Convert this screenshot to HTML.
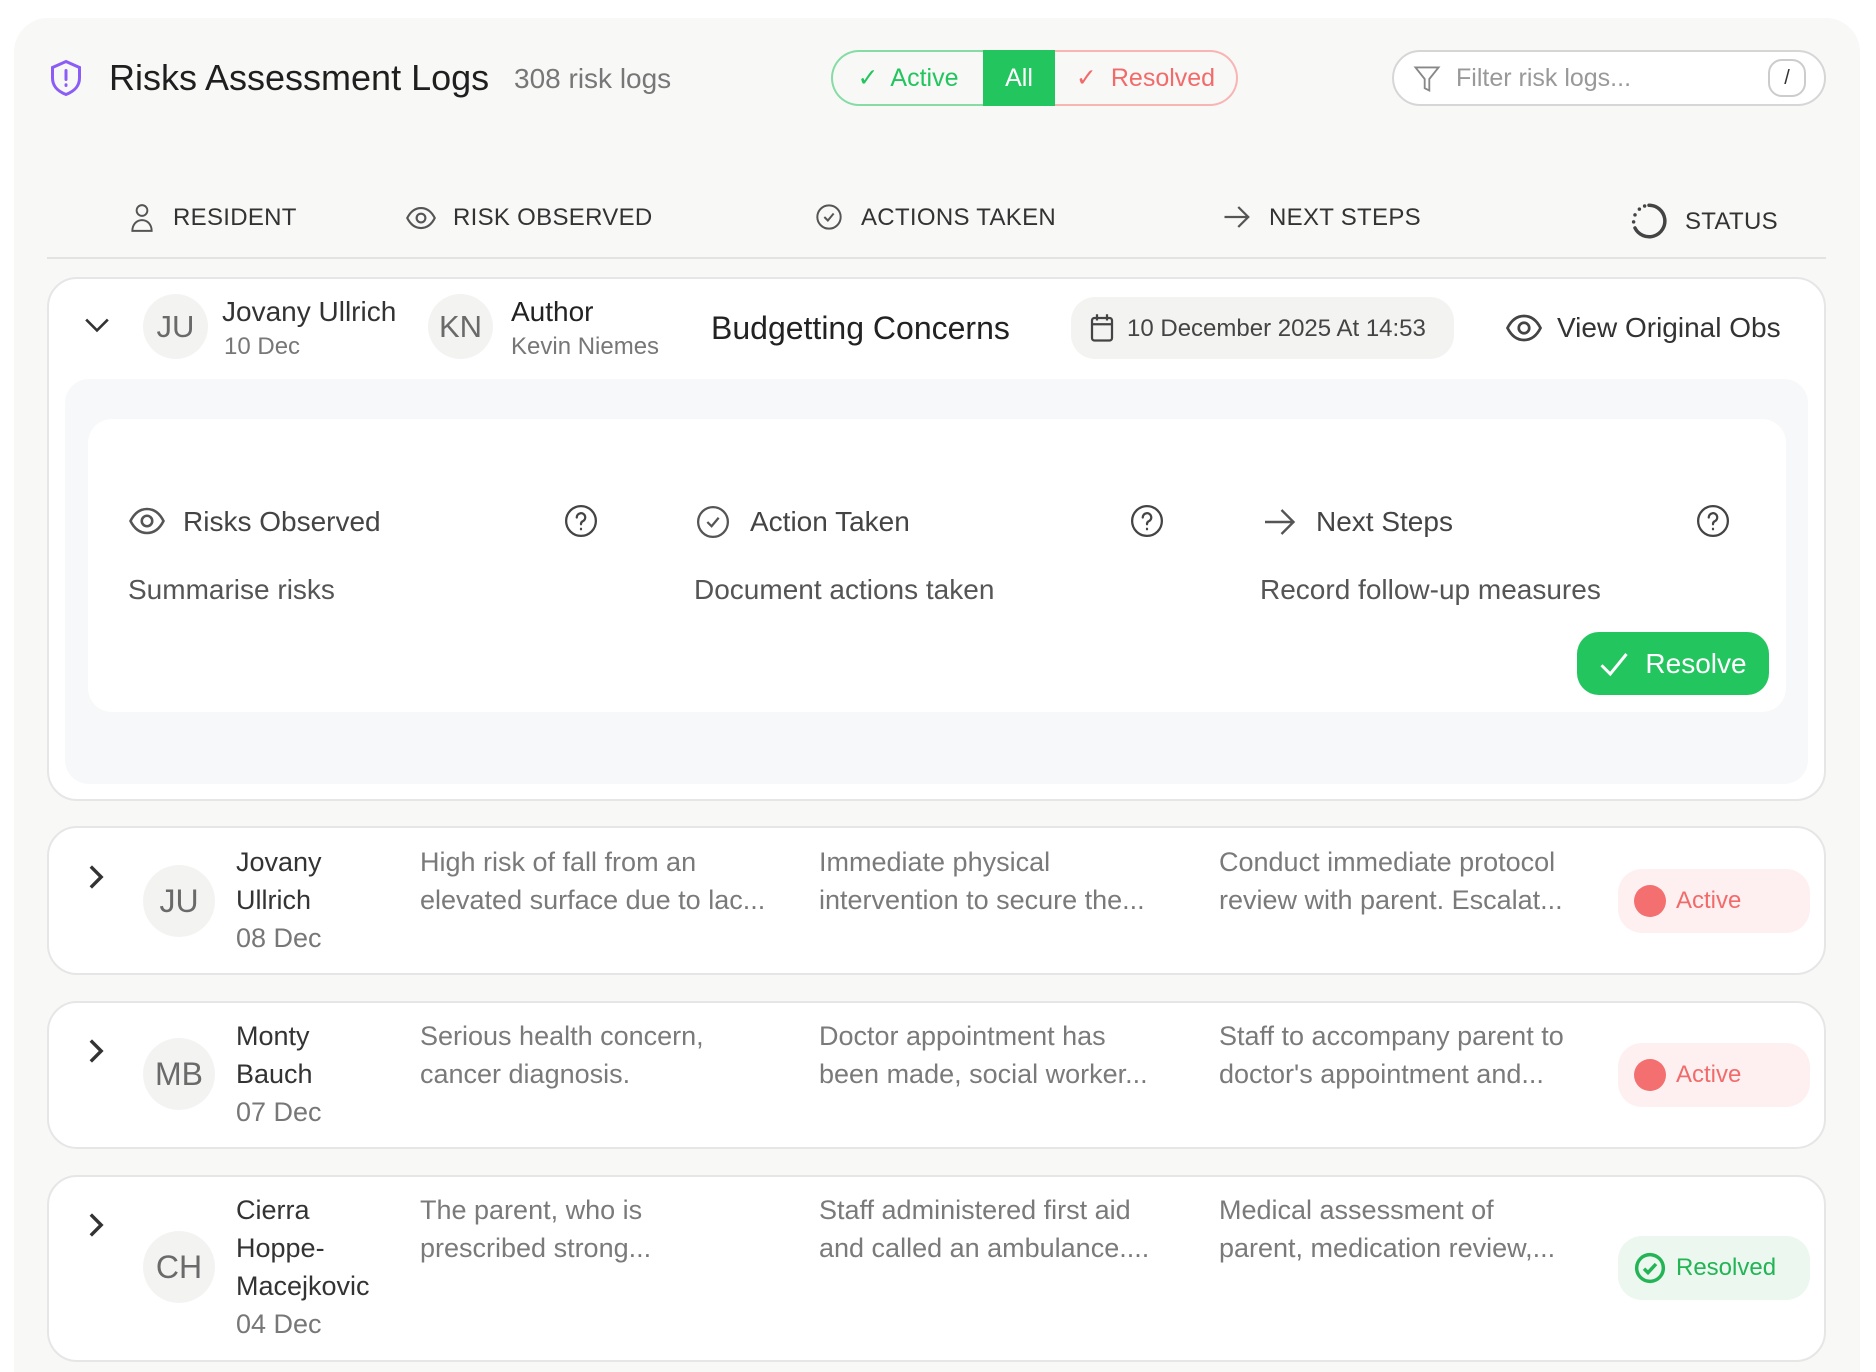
<!DOCTYPE html>
<html><head><meta charset="utf-8"><style>
*{box-sizing:border-box;margin:0;padding:0}
html{width:1876px;height:1372px;overflow:hidden}
body{width:1876px;height:1372px;background:#fff;font-family:"Liberation Sans",sans-serif;position:relative;overflow:hidden;color:#222}
.a{position:absolute}
.outer{left:14px;top:18px;width:1846px;height:1354px;background:#f8f8f7;border-radius:34px 34px 0 0}
.card{background:#fff;border:2px solid #e6e6e6;border-radius:30px}
.hdr{font-size:24px;color:#333;letter-spacing:.3px;top:204px}
.av{border-radius:50%;background:#f3f3f2;color:#6a6a6a;display:flex;align-items:center;justify-content:center}
.rt{font-size:27px;color:#7a7a7a;line-height:38px;white-space:nowrap}
.nm{font-size:27px;color:#333;line-height:38px}
.pill{border-radius:24px;display:flex;align-items:center;font-size:24px}
svg{display:block}
</style></head><body>
<div class="a outer"></div>
<svg class="a" style="left:48px;top:58px" width="36" height="40" viewBox="0 0 24 26" fill="none" stroke="#8b5cf6" stroke-width="2"><path d="M12 2l9 4v7c0 6-4 9-9 11-5-2-9-5-9-11V6z"/><path d="M12 8v6M12 17.5v.5" stroke-linecap="round"/></svg>
<div class="a" style="left:109px;top:57px;font-size:36px;color:#1f1f1f">Risks Assessment Logs</div>
<div class="a" style="left:514px;top:63px;font-size:28px;color:#777">308 risk logs</div>
<div class="a" style="left:831px;top:50px;width:407px;height:56px;display:flex">
 <div style="width:152px;border:2px solid #86dca4;border-right:none;border-radius:28px 0 0 28px;display:flex;align-items:center;justify-content:center;color:#22c55e;font-size:25px;gap:12px"><span>✓</span>Active</div>
 <div style="width:72px;background:#22c55e;color:#fff;display:flex;align-items:center;justify-content:center;font-size:25px">All</div>
 <div style="width:183px;border:2px solid #f9b4b4;border-left:none;border-radius:0 28px 28px 0;display:flex;align-items:center;justify-content:center;color:#f26b6b;font-size:25px;gap:14px"><span>✓</span>Resolved</div>
</div>
<div class="a" style="left:1392px;top:50px;width:434px;height:56px;border:2px solid #d6d6d6;border-radius:28px;background:#fff"></div>
<svg class="a" style="left:1413px;top:64px" width="28" height="30" viewBox="0 0 24 26" fill="none" stroke="#888" stroke-width="1.6"><path d="M2 3h20l-8 10v10l-4-2v-8z"/></svg>
<div class="a" style="left:1456px;top:64px;font-size:25px;color:#999">Filter risk logs...</div>
<div class="a" style="left:1768px;top:59px;width:38px;height:38px;border:2px solid #ccc;border-radius:14px;font-size:20px;text-align:center;line-height:34px;color:#333">/</div>
<svg class="a" style="left:129px;top:203px" width="26" height="30" viewBox="0 0 24 28" fill="none" stroke="#555" stroke-width="1.8"><circle cx="12" cy="7" r="5"/><path d="M3 26c0-6 4-10 9-10s9 4 9 10z"/></svg>
<div class="a hdr" style="left:173px">RESIDENT</div>
<svg class="a" style="left:406px;top:205px" width="30" height="26" viewBox="0 0 24 20" fill="none" stroke="#555" stroke-width="1.7"><path d="M1 10c3-6 7-8 11-8s8 2 11 8c-3 6-7 8-11 8S4 16 1 10z"/><circle cx="12" cy="10" r="3.5"/></svg>
<div class="a hdr" style="left:453px">RISK OBSERVED</div>
<svg class="a" style="left:815px;top:203px" width="28" height="28" viewBox="0 0 24 24" fill="none" stroke="#555" stroke-width="1.7"><circle cx="12" cy="12" r="10"/><path d="M8 12l3 3 5-6"/></svg>
<div class="a hdr" style="left:861px">ACTIONS TAKEN</div>
<svg class="a" style="left:1222px;top:204px" width="30" height="26" viewBox="0 0 24 20" fill="none" stroke="#555" stroke-width="1.8"><path d="M2 10h19M13 2l8 8-8 8"/></svg>
<div class="a hdr" style="left:1269px">NEXT STEPS</div>
<svg class="a" style="left:1628px;top:200px" width="42" height="42" viewBox="0 0 24 24" fill="none" stroke="#444" stroke-width="2" stroke-linecap="round"><path d="M12 3a9 9 0 1 1-8 13"/><path d="M3.2 12.5v0M4 8.5v0M6.5 5.2v0M9.5 3.4v0"/></svg>
<div class="a hdr" style="left:1685px;top:208px">STATUS</div>
<div class="a" style="left:47px;top:257px;width:1779px;height:2px;background:#e3e3e3"></div>
<div class="a card" style="left:47px;top:277px;width:1779px;height:524px"></div>
<svg class="a" style="left:84px;top:316px" width="26" height="18" viewBox="0 0 24 16" fill="none" stroke="#333" stroke-width="2.4"><path d="M2 3l10 10 10-10"/></svg>
<div class="a av" style="left:143px;top:294px;width:65px;height:65px;font-size:31px">JU</div>
<div class="a" style="left:222px;top:296px;font-size:28px;color:#333">Jovany Ullrich</div>
<div class="a" style="left:224px;top:333px;font-size:24px;color:#777">10 Dec</div>
<div class="a av" style="left:428px;top:294px;width:65px;height:65px;font-size:31px">KN</div>
<div class="a" style="left:511px;top:296px;font-size:28px;color:#222">Author</div>
<div class="a" style="left:511px;top:333px;font-size:24px;color:#777">Kevin Niemes</div>
<div class="a" style="left:711px;top:310px;font-size:32px;color:#222">Budgetting Concerns</div>
<div class="a" style="left:1071px;top:297px;width:383px;height:62px;background:#f3f3f2;border-radius:24px"></div>
<svg class="a" style="left:1089px;top:313px" width="26" height="30" viewBox="0 0 20 24" fill="none" stroke="#444" stroke-width="1.8"><rect x="2" y="4" width="16" height="18" rx="2"/><path d="M2 9h16M6 1v5M14 1v5"/></svg>
<div class="a" style="left:1127px;top:315px;font-size:24px;color:#444">10 December 2025 At 14:53</div>
<svg class="a" style="left:1505px;top:313px" width="38" height="30" viewBox="0 0 24 20" fill="none" stroke="#444" stroke-width="1.8"><path d="M1 10c3-6 7-8 11-8s8 2 11 8c-3 6-7 8-11 8S4 16 1 10z"/><circle cx="12" cy="10" r="3.5"/></svg>
<div class="a" style="left:1557px;top:312px;font-size:28px;color:#333">View Original Obs</div>
<div class="a" style="left:65px;top:379px;width:1743px;height:405px;background:#f7f8f9;border-radius:24px"></div>
<div class="a" style="left:88px;top:419px;width:1698px;height:293px;background:#fff;border-radius:24px"></div>
<svg class="a" style="left:128px;top:506px" width="38" height="30" viewBox="0 0 24 20" fill="none" stroke="#555" stroke-width="1.7"><path d="M1 10c3-6 7-8 11-8s8 2 11 8c-3 6-7 8-11 8S4 16 1 10z"/><circle cx="12" cy="10" r="3.5"/></svg>
<div class="a" style="left:183px;top:506px;font-size:28px;color:#444">Risks Observed</div>
<svg class="a" style="left:564px;top:504px" width="34" height="34" viewBox="0 0 24 24" fill="none" stroke="#444" stroke-width="1.6"><circle cx="12" cy="12" r="10.5"/><path d="M9 9.5a3 3 0 1 1 4 2.8c-.8.4-1 1-1 2M12 17.5v.3" stroke-linecap="round"/></svg>
<svg class="a" style="left:696px;top:505px" width="34" height="34" viewBox="0 0 24 24" fill="none" stroke="#555" stroke-width="1.6"><circle cx="12" cy="12" r="10.5"/><path d="M8 12l3 3 5-6"/></svg>
<div class="a" style="left:750px;top:506px;font-size:28px;color:#444">Action Taken</div>
<svg class="a" style="left:1130px;top:504px" width="34" height="34" viewBox="0 0 24 24" fill="none" stroke="#444" stroke-width="1.6"><circle cx="12" cy="12" r="10.5"/><path d="M9 9.5a3 3 0 1 1 4 2.8c-.8.4-1 1-1 2M12 17.5v.3" stroke-linecap="round"/></svg>
<svg class="a" style="left:1262px;top:507px" width="36" height="30" viewBox="0 0 24 20" fill="none" stroke="#555" stroke-width="1.6"><path d="M2 10h19M13 2l8 8-8 8"/></svg>
<div class="a" style="left:1316px;top:506px;font-size:28px;color:#444">Next Steps</div>
<svg class="a" style="left:1696px;top:504px" width="34" height="34" viewBox="0 0 24 24" fill="none" stroke="#444" stroke-width="1.6"><circle cx="12" cy="12" r="10.5"/><path d="M9 9.5a3 3 0 1 1 4 2.8c-.8.4-1 1-1 2M12 17.5v.3" stroke-linecap="round"/></svg>
<div class="a" style="left:128px;top:574px;font-size:28px;color:#555">Summarise risks</div>
<div class="a" style="left:694px;top:574px;font-size:28px;color:#555">Document actions taken</div>
<div class="a" style="left:1260px;top:574px;font-size:28px;color:#555">Record follow-up measures</div>
<div class="a" style="left:1577px;top:632px;width:192px;height:63px;background:#22c55e;border-radius:22px;color:#fff;font-size:28px;display:flex;align-items:center;justify-content:center;gap:16px"><svg width="30" height="26" viewBox="0 0 24 20" fill="none" stroke="#fff" stroke-width="2.4"><path d="M2 11l7 7L22 2"/></svg>Resolve</div>

<div class="a card" style="left:47px;top:826px;width:1779px;height:149px"></div>
<div class="a card" style="left:47px;top:1001px;width:1779px;height:148px"></div>
<div class="a card" style="left:47px;top:1175px;width:1779px;height:187px"></div>

<svg class="a" style="left:88px;top:864px" width="16" height="26" viewBox="0 0 12 20" fill="none" stroke="#333" stroke-width="2.6"><path d="M2 2l8 8-8 8"/></svg>
<div class="a av" style="left:143px;top:865px;width:72px;height:72px;font-size:32px">JU</div>
<div class="a nm" style="left:236px;top:843px">Jovany<br>Ullrich<br><span style="color:#777">08 Dec</span></div>
<div class="a rt" style="left:420px;top:843px">High risk of fall from an<br>elevated surface due to lac...</div>
<div class="a rt" style="left:819px;top:843px">Immediate physical<br>intervention to secure the...</div>
<div class="a rt" style="left:1219px;top:843px">Conduct immediate protocol<br>review with parent. Escalat...</div>
<div class="a pill" style="left:1618px;top:869px;width:192px;height:64px;background:#fef0f0;color:#f26b6b"><span style="width:32px;height:32px;border-radius:50%;background:#f46f6f;margin:0 10px 0 16px"></span>Active</div>

<svg class="a" style="left:88px;top:1038px" width="16" height="26" viewBox="0 0 12 20" fill="none" stroke="#333" stroke-width="2.6"><path d="M2 2l8 8-8 8"/></svg>
<div class="a av" style="left:143px;top:1038px;width:72px;height:72px;font-size:32px">MB</div>
<div class="a nm" style="left:236px;top:1017px">Monty<br>Bauch<br><span style="color:#777">07 Dec</span></div>
<div class="a rt" style="left:420px;top:1017px">Serious health concern,<br>cancer diagnosis.</div>
<div class="a rt" style="left:819px;top:1017px">Doctor appointment has<br>been made, social worker...</div>
<div class="a rt" style="left:1219px;top:1017px">Staff to accompany parent to<br>doctor's appointment and...</div>
<div class="a pill" style="left:1618px;top:1043px;width:192px;height:64px;background:#fef0f0;color:#f26b6b"><span style="width:32px;height:32px;border-radius:50%;background:#f46f6f;margin:0 10px 0 16px"></span>Active</div>

<svg class="a" style="left:88px;top:1212px" width="16" height="26" viewBox="0 0 12 20" fill="none" stroke="#333" stroke-width="2.6"><path d="M2 2l8 8-8 8"/></svg>
<div class="a av" style="left:143px;top:1231px;width:72px;height:72px;font-size:32px">CH</div>
<div class="a nm" style="left:236px;top:1191px">Cierra<br>Hoppe-<br>Macejkovic<br><span style="color:#777">04 Dec</span></div>
<div class="a rt" style="left:420px;top:1191px">The parent, who is<br>prescribed strong...</div>
<div class="a rt" style="left:819px;top:1191px">Staff administered first aid<br>and called an ambulance....</div>
<div class="a rt" style="left:1219px;top:1191px">Medical assessment of<br>parent, medication review,...</div>
<div class="a pill" style="left:1618px;top:1236px;width:192px;height:64px;background:#ebf7ef;color:#22b455"><svg style="margin:0 10px 0 16px" width="32" height="32" viewBox="0 0 24 24" fill="none" stroke="#22b455" stroke-width="2.6"><circle cx="12" cy="12" r="10"/><path d="M7.5 12.5l3 3 6-6.5"/></svg>Resolved</div>
</body></html>
